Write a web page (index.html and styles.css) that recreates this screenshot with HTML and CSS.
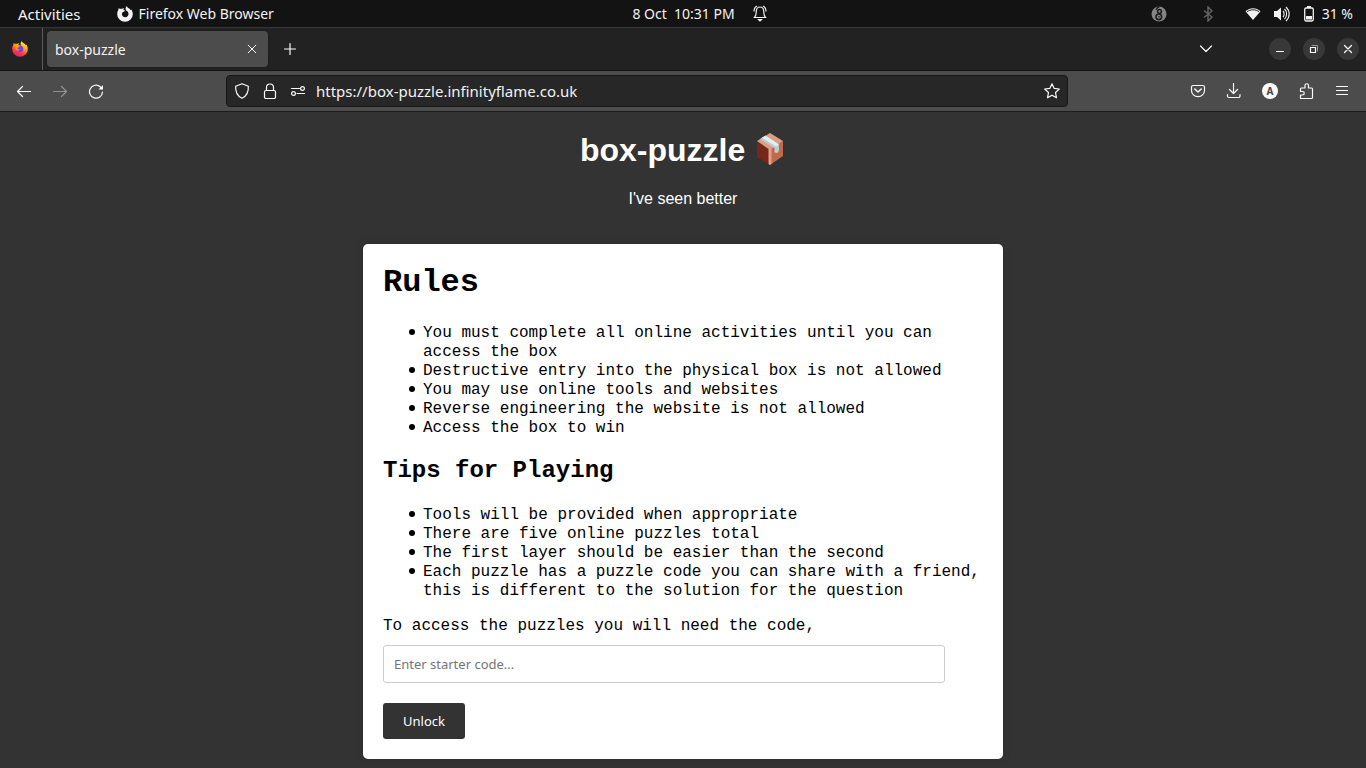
FILE: index.html
```html
<!DOCTYPE html>
<html lang="en">
<head>
    <meta charset="UTF-8">
    <meta name="viewport" content="width=device-width, initial-scale=1.0">
    <title>box-puzzle</title>
    <link rel="stylesheet" href="styles.css">
</head>
<body>
    <!-- Desktop top bar -->
    <header class="topbar">
        <div class="topbar-left">
            <button class="topbar-item activities">Activities</button>
            <button class="topbar-item app-menu">
                <svg width="16" height="16" viewBox="0 0 16 16"><path fill="#f2f2f2" fill-rule="evenodd" d="M9.800 0C10 1.300 11 2 12.200 2.600C12.900 3 13.400 3.700 13.700 4.300L14.200 3.600C15.300 5 15.800 6.500 15.800 8.200A7.800 7.600 0 0 1 .2 8.200C.2 6.400.7 4.900 1.400 3.800L1.600 2L3 3C3.600 2.700 4.400 2.700 5 3C5.600 2.300 6.300 1.900 7.100 1.900C6.500 2.600 6.300 3.200 6.500 3.900L8 4.600C8 5.500 7 5.600 5.900 6.100C5.200 6.600 5.500 7.200 4.800 8C5 10 6.300 11.200 8.200 11.200C10.200 11.200 11.500 9.800 11.500 8C11.500 6.500 10.800 5.400 9.400 4.800C8.200 3.500 8.300 1.500 9.800 0Z"/></svg>
                <span>Firefox Web Browser</span>
            </button>
        </div>
        <div class="clock">
            <span>8 Oct&nbsp; 10:31 PM</span>
            <svg width="16" height="18" viewBox="0 0 16 18" fill="none" stroke="#f2f2f2" stroke-width="1.2"><path d="M2.500 12.500C4.500 10.500 4 8.500 4.300 6C4.500 3.500 6 2 8 2S11.500 3.500 11.700 6C12 8.500 11.500 10.500 13.500 12.500Z"/><path d="M2 6.500C2 4 3 2 5 1M14 6.500C14 4 13 2 11 1"/><path d="M6.500 14.500H9.500L8 16Z" fill="#f2f2f2"/></svg>
        </div>
        <div class="topbar-right">
            <svg class="tray-app" width="16" height="16" viewBox="0 0 16 16"><circle cx="8" cy="8" r="7.500" fill="#858585"/><path d="M8.500 .5C6 1.500 5.200 2.500 5.500 4" fill="none" stroke="#1d1d1d" stroke-width="1.500"/><circle cx="8.500" cy="5.500" r="1.900" fill="none" stroke="#1d1d1d" stroke-width="1.500"/><circle cx="7.800" cy="10.800" r="2.800" fill="none" stroke="#1d1d1d" stroke-width="1.600"/><circle cx="8" cy="10.800" r=".8" fill="#1d1d1d"/></svg>
            <svg class="tray-bt" width="10" height="16" viewBox="0 0 10 16" fill="none" stroke="#666" stroke-width="1.400"><path d="M1 4.500L9 11L5 15V1L9 5L1 11.500"/></svg>
            <svg class="tray-wifi" width="16" height="14" viewBox="0 0 16 14"><path d="M.5 4.200C5 .2 11 .2 15.500 4.200L8 13Z" fill="#f2f2f2"/><path d="M2 4.700C5.500 2.200 10.500 2.200 14 4.700" fill="none" stroke="#222"/></svg>
            <svg class="tray-sound" width="16" height="16" viewBox="0 0 16 16"><path d="M0 5H3L7 1.500V14.500L3 11H0Z" fill="#f2f2f2"/><path d="M9 5C10.500 6.500 10.500 9.500 9 11M10.500 3C13.300 5.500 13.300 10.500 10.500 13M12 1C16.200 5 16.200 11 12 15" fill="none" stroke="#f2f2f2" stroke-width="1.100"/></svg>
            <svg class="tray-battery" width="10" height="16" viewBox="0 0 10 16"><path d="M3 0H7V2H3Z" fill="#f2f2f2"/><rect x=".7" y="2" width="8.600" height="13" rx="1.500" fill="none" stroke="#f2f2f2" stroke-width="1.300"/><path d="M2 10H8V13.500H2Z" fill="#f2f2f2"/></svg>
            <span>31 %</span>
        </div>
    </header>

    <!-- Tabs -->
    <div class="tabbar">
        <div class="firefox-view">
            <svg width="16" height="16" viewBox="0 0 16 16">
                <defs>
                    <linearGradient id="flame" x1="12" y1="1" x2="5" y2="16" gradientUnits="userSpaceOnUse">
                        <stop offset="0" stop-color="#fff44f"/>
                        <stop offset=".4" stop-color="#ff980e"/>
                        <stop offset=".7" stop-color="#ff3647"/>
                        <stop offset="1" stop-color="#e31587"/>
                    </linearGradient>
                </defs>
                <path fill="url(#flame)" d="M9.800 0C10 1.300 11 2 12.200 2.600C12.900 3 13.400 3.700 13.700 4.300L14.200 3.600C15.300 5 15.800 6.500 15.800 8.200A7.800 7.600 0 0 1 .2 8.200C.2 6.400.7 4.900 1.400 3.800L1.600 2L3 3C3.600 2.700 4.400 2.700 5 3C5.600 2.300 6.300 1.900 7.100 1.900C6.500 2.600 6.300 3.200 6.500 3.900L9.400 4.800C8.200 3.500 8.300 1.500 9.800 0Z"/>
                <circle cx="8" cy="8" r="3.300" fill="#7542e5"/>
                <path d="M3.500 5.500C5 4.200 7 4.500 8 5.200C7.500 6.200 6 6 5.500 7.300C5.700 8.500 7 8.600 8 8.200C7 10 4.500 10 3.800 8.200Z" fill="#ff980e"/>
            </svg>
        </div>
        <div class="tab">
            <span>box-puzzle</span>
            <button class="icon-btn small" aria-label="Close tab"><svg width="10" height="10" viewBox="0 0 10 10"><path d="M1.200 1.200L8.800 8.800M8.800 1.200L1.200 8.800"/></svg></button>
        </div>
        <button class="icon-btn new-tab" aria-label="New tab"><svg width="14" height="14" viewBox="0 0 14 14"><path d="M7 1.500V12.500M1.500 7H12.500"/></svg></button>
        <button class="icon-btn tab-list" aria-label="List tabs"><svg width="14" height="8" viewBox="0 0 14 8"><path d="M1.500 1L7 6.500L12.500 1"/></svg></button>
        <div class="window-buttons">
            <button class="win-btn" aria-label="Minimise"><svg width="10" height="10" viewBox="0 0 10 10"><path d="M1.500 7.500H8.500"/></svg></button>
            <button class="win-btn" aria-label="Restore"><svg width="10" height="10" viewBox="0 0 10 10"><path d="M1.500 3.500H6.500V8.500H1.500Z"/><path d="M3 1.500H8.500V7" stroke="#999" stroke-width="1"/></svg></button>
            <button class="win-btn" aria-label="Close"><svg width="10" height="10" viewBox="0 0 10 10"><path d="M1.500 1.500L8.500 8.500M8.500 1.500L1.500 8.500"/></svg></button>
        </div>
    </div>

    <!-- Navigation toolbar -->
    <nav class="toolbar">
        <div class="nav-buttons">
            <button class="icon-btn" aria-label="Back"><svg width="16" height="16" viewBox="0 0 16 16"><path d="M14.500 8.500H1.500M6.500 3.500L1.500 8.500L6.500 13.500"/></svg></button>
            <button class="icon-btn" aria-label="Forward" disabled><svg width="16" height="16" viewBox="0 0 16 16"><path d="M1.500 8.500H14.500M9.500 3.500L14.500 8.500L9.500 13.500"/></svg></button>
            <button class="icon-btn" aria-label="Reload"><svg width="16" height="16" viewBox="0 0 16 16"><path d="M14.500 9A6.500 6.500 0 1 1 12.500 4L14 5.500"/><path d="M15 2V6.500H10.500Z" class="solid"/></svg></button>
        </div>
        <div class="urlbar">
            <svg width="16" height="16" viewBox="0 0 16 16"><path d="M8 .8L14.300 3.300C14.700 9 12.500 13.200 8 15.300C3.500 13.200 1.300 9 1.700 3.300Z"/></svg>
            <svg width="16" height="16" viewBox="0 0 16 16"><rect x="2.500" y="7.500" width="11" height="8" rx="1.500"/><path d="M4.500 7.500V4.500A3.500 3.500 0 0 1 11.500 4.500V7.500"/></svg>
            <svg width="16" height="16" viewBox="0 0 16 16"><path d="M1.500 5.500H9.500M7 10.500H14.500"/><circle cx="12.500" cy="5.500" r="1.900"/><circle cx="3.500" cy="10.500" r="1.900"/></svg>
            <input type="text" aria-label="Address" value="https://box-puzzle.infinityflame.co.uk">
            <svg width="16" height="16" viewBox="0 0 16 16"><path d="M8 .8L10.200 5.400L15.300 6L11.500 9.500L12.500 14.800L8 12.200L3.500 14.800L4.500 9.500L.7 6L5.800 5.400Z"/></svg>
        </div>
        <div class="tool-buttons">
            <button class="icon-btn" aria-label="Save to Pocket"><svg width="16" height="16" viewBox="0 0 16 16"><path d="M3 2.500H13A1.700 1.700 0 0 1 14.500 4V7.500A6.500 6.200 0 0 1 1.500 7.500V4A1.700 1.700 0 0 1 3 2.500Z"/><path d="M4.800 6L8 9L11.200 6" stroke-width="1.500"/></svg></button>
            <button class="icon-btn" aria-label="Downloads"><svg width="16" height="16" viewBox="0 0 16 16"><path d="M7.500 .5V10.500M3.500 6.500L7.500 10.500L11.500 6.500M1.500 11.500V13A1.500 1.500 0 0 0 3 14.500H12.500A1.500 1.500 0 0 0 14 13V11.500"/></svg></button>
            <button class="icon-btn account" aria-label="Account">A</button>
            <button class="icon-btn" aria-label="Extensions"><svg width="16" height="16" viewBox="0 0 16 16"><path d="M2.500 15.500V12H4.500A1.700 1.700 0 0 0 4.500 8.500H2.500V6A1 1 0 0 1 3.500 5H7V2.500A1.700 1.700 0 0 1 10.500 2.500V5H13.500A1 1 0 0 1 14.500 6V14.500A1 1 0 0 1 13.500 15.500Z"/></svg></button>
            <button class="icon-btn" aria-label="Menu"><svg width="16" height="16" viewBox="0 0 16 16"><path d="M2.500 3.500H13.500M2.500 7.500H13.500M2.500 11.500H13.500"/></svg></button>
        </div>
    </nav>

    <!-- Page -->
    <main class="page">
        <div class="intro">
            <h1>box-puzzle
                <svg class="box-icon" width="28" height="34" viewBox="0 0 28 34">
                    <path d="M1 9L14 17.500L13.500 33L1 25Z" fill="#74271a"/>
                    <path d="M14 17.500L27 9V24L14 33Z" fill="#c06a4c"/>
                    <path d="M14 1L27 9L14 18L1 9Z" fill="#dc9f82"/>
                    <path d="M12.500 17L15.500 17V32L14 33L12.500 32Z" fill="#dfa085"/>
                    <path d="M4 7L8.500 4L23 13V18.500L21.500 21L18.500 20.500V16Z" fill="#bccbd4"/>
                    <path d="M6 5.700L9.500 3.500L23 12.500L20 14.500Z" fill="#e4edf2"/>
                </svg>
            </h1>
            <p>I've seen better</p>
        </div>

        <div class="container">
            <h1>Rules</h1>
            <ul>
                <li>You must complete all online activities until you can access the box</li>
                <li>Destructive entry into the physical box is not allowed</li>
                <li>You may use online tools and websites</li>
                <li>Reverse engineering the website is not allowed</li>
                <li>Access the box to win</li>
            </ul>
            <h2>Tips for Playing</h2>
            <ul>
                <li>Tools will be provided when appropriate</li>
                <li>There are five online puzzles total</li>
                <li>The first layer should be easier than the second</li>
                <li>Each puzzle has a puzzle code you can share with a friend, this is different to the solution for the question</li>
            </ul>
            <label for="starterCode">To access the puzzles you will need the code,</label>
            <input type="text" id="starterCode" placeholder="Enter starter code...">
            <button id="unlock-btn">Unlock</button>
        </div>
    </main>
</body>
</html>
```

FILE: styles.css
```css
* {
    box-sizing: border-box;
}
body {
    margin: 0;
    min-height: 100vh;
    background: #333;
    font-family: "Noto Sans", sans-serif;
    font-size: 14px;
    color: #f2f2f2;
}
button,
input {
    font-family: inherit;
    font-size: inherit;
    color: inherit;
}
svg {
    display: block;
    flex-shrink: 0;
}

/* Top bar */
.topbar {
    display: grid;
    grid-template-columns: 1fr auto 1fr;
    align-items: center;
    height: 27px;
    background: #131313;
}
.topbar-left,
.topbar-right,
.clock,
.app-menu {
    display: flex;
    align-items: center;
}
.topbar-left {
    gap: 36px;
    padding-left: 18px;
}
.topbar-item {
    padding: 0;
    border: none;
    background: none;
}
.activities {
    font-size: 15px;
    line-height: 18px;
}
.app-menu {
    gap: 6px;
}
.clock {
    gap: 17px;
    padding-left: 34px;
}
.topbar-right {
    justify-content: flex-end;
    padding-right: 13px;
}
.tray-app {
    margin-right: 36px;
}
.tray-bt {
    margin-right: 32px;
}
.tray-wifi {
    margin-right: 13px;
}
.tray-sound {
    margin-right: 14px;
}
.tray-battery {
    margin-right: 8px;
}

/* Tabs */
.tabbar {
    display: flex;
    align-items: center;
    height: 44px;
    border-top: 1px solid #363636;
    border-bottom: 1px solid #141414;
    background: #222;
}
.firefox-view {
    display: flex;
    align-items: center;
    width: 43px;
    height: 100%;
    padding-left: 12px;
    border-right: 1px solid #5a5a5a;
}
.tab {
    display: flex;
    justify-content: space-between;
    align-items: center;
    width: 221px;
    height: 36px;
    margin-left: 4px;
    padding: 0 4px 0 8px;
    border-radius: 4px;
    background: #4c4c4c;
    box-shadow: 0 0 3px rgba(0, 0, 0, 0.4);
}
.icon-btn,
.win-btn {
    display: flex;
    justify-content: center;
    align-items: center;
    flex-shrink: 0;
    width: 36px;
    height: 32px;
    padding: 0;
    border: none;
    background: none;
}
.icon-btn svg,
.win-btn svg,
.urlbar svg {
    fill: none;
    stroke: #fbfbfe;
    stroke-width: 1.2;
    stroke-linecap: round;
    stroke-linejoin: round;
}
.icon-btn .solid {
    fill: #fbfbfe;
    stroke: none;
}
.icon-btn:disabled {
    opacity: 0.4;
}
.small {
    width: 24px;
    height: 24px;
}
.small svg {
    stroke-width: 1;
}
.new-tab {
    margin-left: 4px;
}
.tab-list {
    margin-left: auto;
}
.window-buttons {
    display: flex;
    gap: 12px;
    padding: 0 7px 0 45px;
}
.win-btn {
    width: 22px;
    height: 22px;
    border-radius: 50%;
    background: #383838;
}

/* Toolbar */
.toolbar {
    display: flex;
    align-items: center;
    height: 41px;
    border-bottom: 1px solid #1c1c1c;
    background: #4c4c4c;
}
.nav-buttons {
    display: flex;
    width: 226px;
    padding-left: 6px;
}
.urlbar {
    display: flex;
    align-items: center;
    flex: 1;
    gap: 12px;
    height: 32px;
    padding: 0 7px;
    border: 1px solid #181818;
    border-radius: 4px;
    background: #272727;
}
.urlbar input {
    flex: 1;
    min-width: 0;
    padding: 0;
    margin-left: -2px;
    border: none;
    outline: none;
    background: none;
    font-size: 15px;
}
.tool-buttons {
    display: flex;
    justify-content: flex-end;
    width: 298px;
    padding-right: 6px;
}
.account {
    width: 16px;
    height: 16px;
    margin: 8px 10px;
    border-radius: 50%;
    background: #fbfbfe;
    color: #444;
    font-size: 10px;
    font-weight: bold;
}

/* Page */
.intro {
    padding: 20px 20px 0;
    text-align: center;
    font-family: "Liberation Sans", sans-serif;
    font-size: 16px;
    color: #fff;
}
.intro h1 {
    margin: 0 0 21px;
    font-size: 32px;
    line-height: 37px;
}
.intro p {
    margin: 0;
    line-height: 18px;
}
.box-icon {
    display: inline-block;
    margin: 0 2px;
    vertical-align: -5px;
}
.container {
    max-width: 640px;
    margin: 36px auto 0;
    padding: 20px;
    border-radius: 5px;
    background: #fff;
    box-shadow: 0 0 10px rgba(0, 0, 0, 0.1);
    font-family: "Liberation Mono", monospace;
    font-size: 16px;
    line-height: 19px;
    color: #000;
}
.container h1 {
    margin: 0 0 22px;
    font-size: 32px;
    line-height: 38px;
}
.container h2 {
    margin: 19px 0 21px;
    font-size: 24px;
    line-height: 28px;
}
.container ul {
    margin: 0 0 16px;
    padding-left: 40px;
    list-style: none;
}
.container li::before {
    content: "";
    display: inline-block;
    width: 6px;
    height: 6px;
    margin: 0 8px 0 -14px;
    border-radius: 50%;
    background: #000;
    vertical-align: 2px;
}
.container label {
    display: block;
}
#starterCode {
    display: block;
    width: calc(100% - 38px);
    height: 38px;
    margin: 9px 0 20px;
    padding: 10px;
    border: 1px solid #ccc;
    border-radius: 3px;
    background: #fff;
    font-family: "Noto Sans", sans-serif;
    font-size: 13px;
}
#starterCode::placeholder {
    color: #757575;
}
#unlock-btn {
    display: block;
    height: 36px;
    padding: 10px 20px;
    border: none;
    border-radius: 3px;
    background: #333;
    color: #fff;
    font-family: "Noto Sans", sans-serif;
    font-size: 13px;
    line-height: 16px;
    cursor: pointer;
}
```
